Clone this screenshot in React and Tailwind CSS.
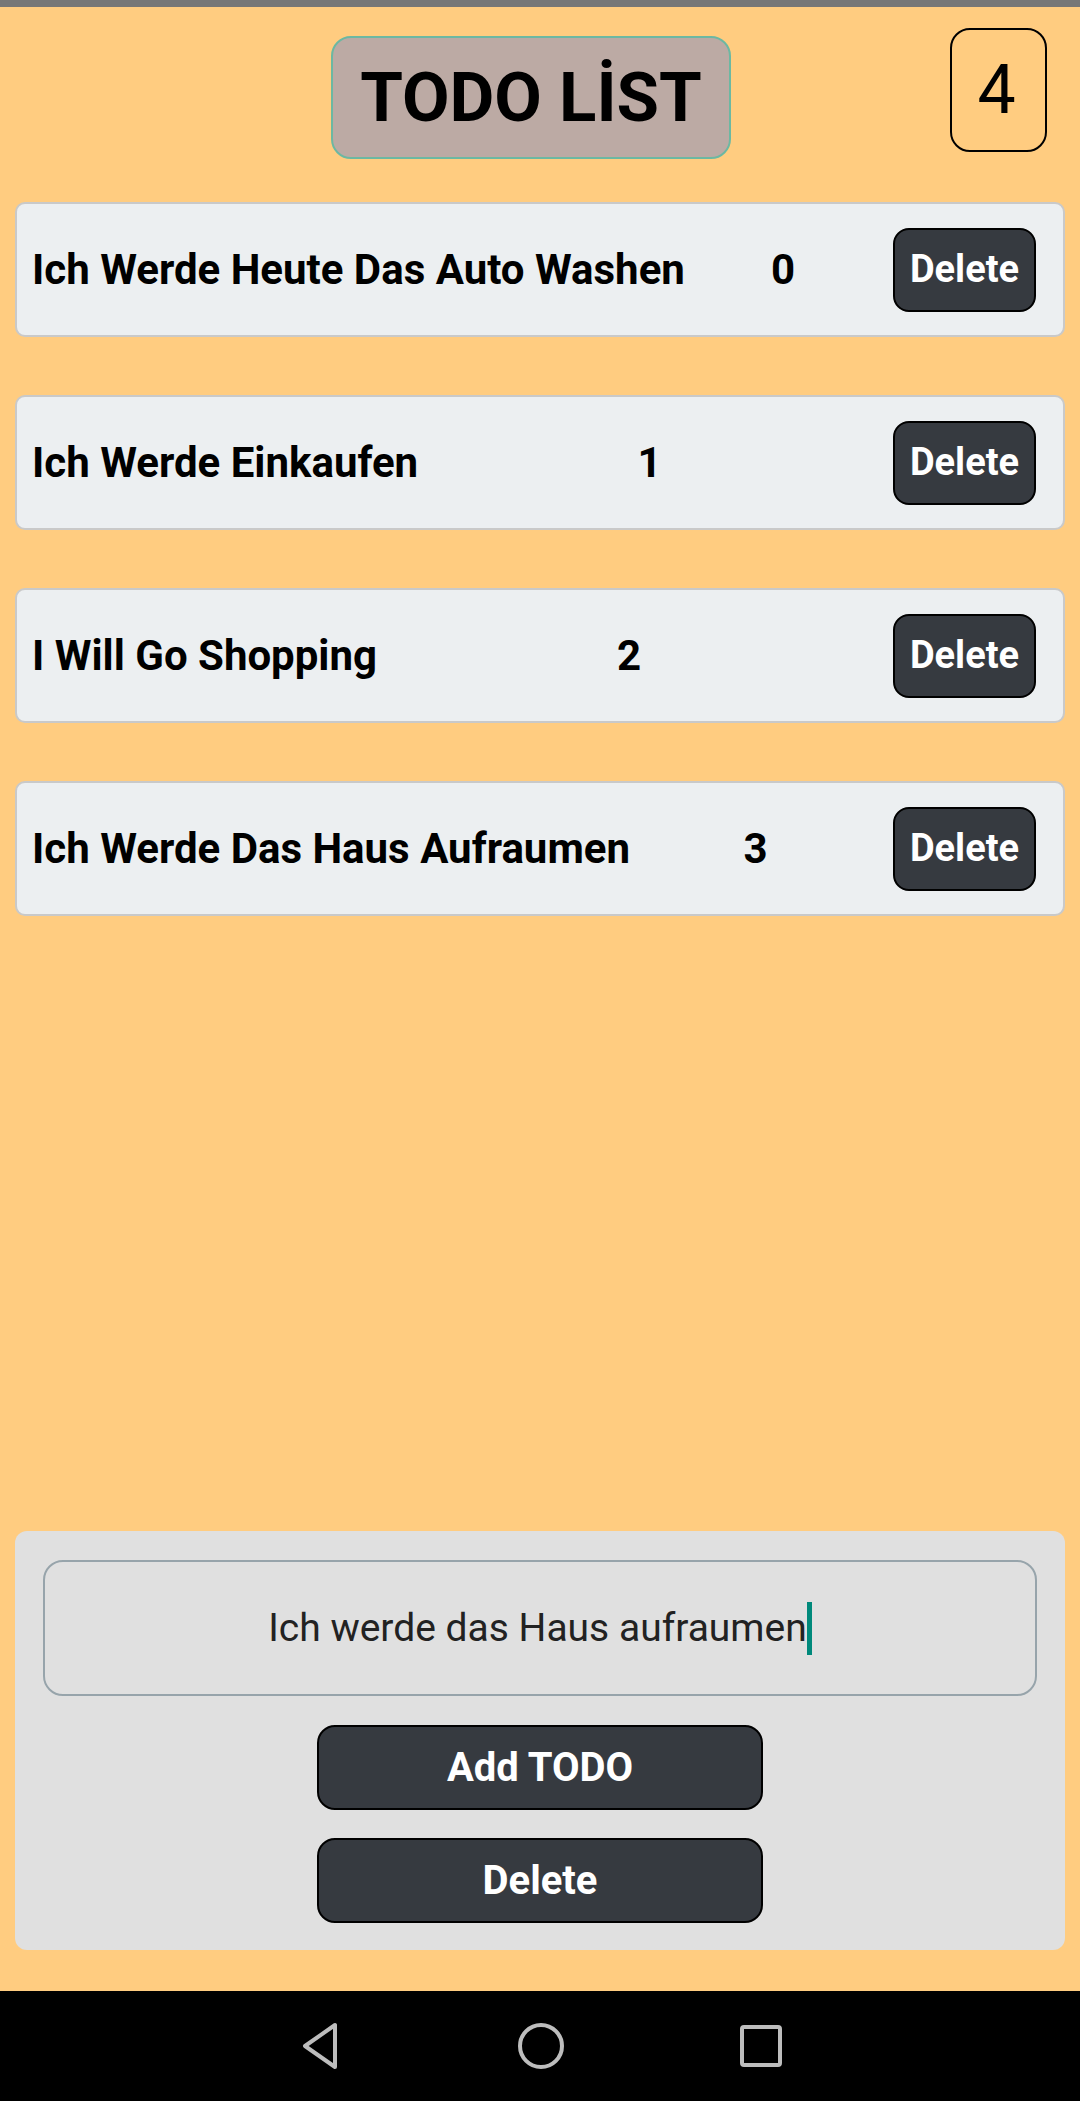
import React, { useState } from "react";

const initialTodos = [
  "Ich Werde Heute Das Auto Washen",
  "Ich Werde Einkaufen",
  "I Will Go Shopping",
  "Ich Werde Das Haus Aufraumen",
];

const TodoRow = ({ text, index, onDelete }) => (
  <div className="flex items-center justify-between h-[135px] pl-[15px] pr-[27px] bg-[#eceff1] border-2 border-[#c9c9c9] rounded-[10px]">
    <span className="text-[42px] font-bold text-black">{text}</span>
    <span className="text-[42px] font-bold text-black mr-[12px]">{index}</span>
    <button
      onClick={onDelete}
      className="w-[143px] h-[84px] bg-[#363a40] border-2 border-black rounded-[16px] text-white text-[38px] font-bold"
    >
      Delete
    </button>
  </div>
);

const NavBar = () => (
  <div className="h-[110px] bg-black flex items-center justify-center gap-[175px]">
    <svg width="46" height="48" viewBox="0 0 46 48" fill="none" stroke="#bdbdbd" strokeWidth="4" strokeLinejoin="round">
      <path d="M38 3 L38 45 L8 24 Z" />
    </svg>
    <svg width="46" height="48" viewBox="0 0 46 48" fill="none" stroke="#bdbdbd" strokeWidth="4">
      <circle cx="23" cy="24" r="21" />
    </svg>
    <svg width="44" height="44" viewBox="0 0 44 44" fill="none" stroke="#bdbdbd" strokeWidth="4">
      <rect x="3" y="3" width="38" height="38" rx="2" />
    </svg>
  </div>
);

export default function App() {
  const [todos, setTodos] = useState(initialTodos);
  const [input, setInput] = useState("Ich werde das Haus aufraumen");

  return (
    <div className="h-[2101px] w-[1080px] flex flex-col font-['Roboto',sans-serif]">
      <div className="h-[7px] bg-[#777777]" />
      <div className="flex-1 flex flex-col bg-[#ffcc80]">
        <div className="flex items-start pl-[331px] pr-[33px] pt-[21px]">
          <div className="mt-[8px] w-[400px] h-[123px] flex items-center justify-center bg-[#bcaaa4] border-2 border-[#6cb8a2] rounded-[20px]">
            <h1 className="text-[69px] font-bold text-black leading-none">TODO LİST</h1>
          </div>
          <div className="ml-auto w-[97px] h-[124px] flex items-center justify-center border-2 border-black rounded-[20px]">
            <span className="text-[68px] text-black leading-none pr-[4px]">{todos.length}</span>
          </div>
        </div>

        <div className="flex flex-col gap-[58px] px-[15px] mt-[43px]">
          {todos.map((t, i) => (
            <TodoRow
              key={i}
              text={t}
              index={i}
              onDelete={() => setTodos(todos.filter((_, j) => j !== i))}
            />
          ))}
        </div>

        <div className="flex-1" />

        <div className="mx-[15px] mb-[41px] bg-[#e0e0e0] rounded-[12px] pt-[29px] pb-[27px] px-[28px] flex flex-col items-center">
          <div className="w-full h-[136px] border-2 border-[#97a4ab] rounded-[20px] flex items-center justify-center">
            <span className="text-[39px] text-[#222222]">{input}</span>
            <span className="w-[5px] h-[53px] bg-[#00897b]" />
          </div>
          <button
            onClick={() => input && setTodos([...todos, input])}
            className="mt-[29px] w-[446px] h-[85px] bg-[#363a40] border-2 border-black rounded-[18px] text-white text-[40px] font-bold"
          >
            Add TODO
          </button>
          <button
            onClick={() => setInput("")}
            className="mt-[28px] w-[446px] h-[85px] bg-[#363a40] border-2 border-black rounded-[18px] text-white text-[40px] font-bold"
          >
            Delete
          </button>
        </div>
      </div>
      <NavBar />
    </div>
  );
}
